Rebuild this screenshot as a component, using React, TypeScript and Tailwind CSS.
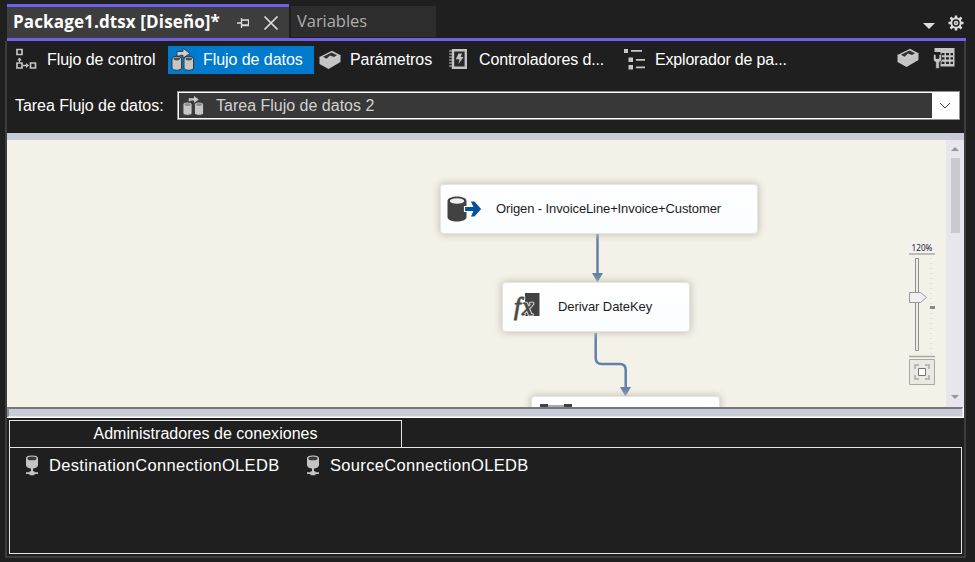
import type { ReactNode } from 'react';

function ControlFlowIcon() {
  return (
    <svg className="shrink-0" width="24" height="24" viewBox="0 0 24 24" fill="none" stroke="#c4c4c4" strokeWidth="1.700">
      <path d="M2 1.500h5v5H2zM2 15h5v5H2zM15.500 15h5v5h-5z" />
      <path d="M4.500 10v4M8 17.500h4" strokeWidth="1.300" />
      <path d="M2.200 12.500l2.300-3 2.300 3zM11 15l3 2.500-3 2.500z" fill="#c4c4c4" stroke="none" />
    </svg>
  );
}

function DataFlowIcon({ size = 24, compact = false }: { size?: number; compact?: boolean }) {
  return (
    <svg className="shrink-0" width={size} height={size} viewBox="0 0 24 24">
      <path d="M1 11c0-3.500 9.500-3.500 9.500 0v9c0 3-9.500 3-9.500 0zM13 11c0-3.500 9.500-3.500 9.500 0v9c0 3-9.500 3-9.500 0z" fill="#c6c6c6" stroke="#383838" strokeWidth="1" />
      <ellipse cx="5.800" cy="11" rx="3.300" ry="1.400" fill={compact ? '#8b8b8b' : '#505050'} />
      <ellipse cx="17.800" cy="11" rx="3.300" ry="1.400" fill={compact ? '#8b8b8b' : '#505050'} />
      {compact ? (
        <path d="M7 7.500V4.500h5.500V2l5 3.700-5 3.600V6.800H8.800v.7z" fill="#c8c8c8" />
      ) : (
        <path d="M6 8V3.500h6V.3l7 5.200-7 4.500V7.300H9V8z" fill="#cecece" stroke="#383838" strokeWidth=".9" />
      )}
    </svg>
  );
}

function ParametersIcon() {
  return (
    <svg className="shrink-0" width="22" height="20" viewBox="0 0 22 20">
      <path d="M.5 7L13 .8l8.500 4.400v6.800L9.500 19 .5 14z" fill="#c4c4c4" />
      <path d="M4 6.800L12.500 2.600 18 5.200l-3 1.700-4-1.500-3.500 3.400z" fill="#303030" />
      <path d="M.5 7l9 4 12-5.800" fill="none" stroke="#d2d2d2" strokeWidth=".7" />
    </svg>
  );
}

function EventHandlersIcon() {
  return (
    <svg className="shrink-0" width="20" height="21" viewBox="0 0 20 21">
      <path d="M5 1.200h12.800v17.600H5z" fill="#292929" stroke="#c4c4c4" strokeWidth="2.400" />
      <path d="M1 2h5M1 5h5M1 8h5M1 11h5M1 14h5M1 17h5" stroke="#c4c4c4" strokeWidth="1.200" />
      <path d="M10.500 4.500h3.500l-1.300 3.500h2.800l-5 7 1-4.800H7.800z" fill="#c4c4c4" />
    </svg>
  );
}

function ExplorerIcon() {
  return (
    <svg className="shrink-0" width="24" height="24" viewBox="0 0 24 24" fill="#c8c8c8">
      <path d="M1 1h4v4H1zM5.500 9.500H10V14H5.500zM5.500 17H10v4.500H5.500zM8 2h11v1.700H8zM13 11h9v1.700h-9zM13 18.500h9v1.700h-9z" />
    </svg>
  );
}

function GridToolIcon() {
  return (
    <svg className="shrink-0" width="22" height="22" viewBox="0 0 22 22">
      <path d="M1.500 1h20v18.500h-14V5h-6z" fill="#c6c6c6" />
      <path d="M8.500 6h3v2.200h-3zM13 6h3v2.200h-3zM17.500 6h2.500v2.200h-2.500zM8.500 10.300h3v2.200h-3zM13 10.300h3v2.200h-3zM17.500 10.300h2.500v2.200h-2.500zM8.500 14.700h3v2.200h-3zM13 14.700h3v2.200h-3zM17.500 14.700h2.500v2.200h-2.500z" fill="#252525" />
      <path d="M.5 7.500v6l2.300 1.800V21.500h3.400v-6.200l2.300-1.800v-6H6v4H3v-4z" fill="#c6c6c6" stroke="#252525" strokeWidth=".7" />
    </svg>
  );
}

function ConnectionIcon() {
  return (
    <svg className="shrink-0" width="14" height="21" viewBox="0 0 14 21" fill="#c4c4c4">
      <path d="M1 3c0-3.300 12-3.300 12 0v7c0 2.500-3 3.300-5 3.500v2.700h1.500v1H13v1.700H9.500v1.300h-5v-1.300H1v-1.700h3.500v-1H6v-2.700c-2-.2-5-1-5-3.500z" />
      <ellipse cx="7" cy="3.400" rx="4.600" ry="1.900" fill="#393939" />
    </svg>
  );
}

function TaskNode({ className, children }: { className: string; children?: ReactNode }) {
  return (
    <div className={`absolute flex items-center rounded-[4px] border border-[#e6e4df] bg-linear-to-b from-white to-[#fafcff] text-[13px] tracking-[-0.110px] text-[#1c1c1c] shadow-[0_0_7px_1px_#c6c2b4] ${className}`}>
      {children}
    </div>
  );
}

function Tab({ className, icon, children, active = false }: { className: string; icon: ReactNode; children: ReactNode; active?: boolean }) {
  return (
    <div className={`flex h-7 shrink-0 items-center whitespace-nowrap ${className} ${active ? 'bg-[#007acc]' : ''}`}>
      {icon}
      {children}
    </div>
  );
}

function Canvas() {
  return (
    <main className="relative flex h-[267px] shrink-0 justify-end overflow-hidden bg-[#f4f1e9]">
      <svg className="absolute left-0 top-0" width="939" height="267" fill="none" stroke="#6280a8" strokeWidth="2.500">
        <path d="M590.500 94v42M588.700 193v25q0 6 6 6h18q6 0 6 6v20" />
        <path d="M585 133h11l-5.500 9.500zM613 247h11l-5.500 9.500z" fill="#6280a8" stroke="none" />
      </svg>
      <TaskNode className="left-[433px] top-[44px] h-[50px] w-[318px]">
        <svg className="ml-[6px] shrink-0" width="36" height="28" viewBox="0 0 36 28">
          <path d="M.5 6c0-6 19-6 19 0v16c0 6-19 6-19 0z" fill="#424242" />
          <ellipse cx="10" cy="6" rx="7.200" ry="2.800" fill="#efefef" />
          <path d="M17.500 11.500h8L23 6h5l7 8-7 8h-5l2.500-5.500h-8z" fill="#00539c" stroke="white" strokeWidth="1.200" />
        </svg>
        <span className="ml-[13px] whitespace-nowrap">Origen - InvoiceLine+Invoice+Customer</span>
      </TaskNode>
      <TaskNode className="left-[495px] top-[142px] h-[50px] w-[188px]">
        <svg className="ml-[6px] shrink-0" width="32" height="34" viewBox="0 0 32 34">
          <path d="M16 3h14.500v23H16z" fill="#424242" />
          <g fontFamily="Liberation Serif, serif" fontSize="25" fontStyle="italic" strokeLinejoin="round">
            <g fill="#f4f4f4" stroke="#f4f4f4" strokeWidth="2.500">
              <text x="5" y="25">f</text>
              <text x="13" y="25">x</text>
            </g>
            <g fill="#484848" stroke="#484848" strokeWidth=".8">
              <text x="5" y="25">f</text>
              <text x="13" y="25">x</text>
            </g>
          </g>
        </svg>
        <span className="ml-[17px] tracking-[-0.080px]">Derivar DateKey</span>
      </TaskNode>
      <TaskNode className="left-[524px] top-[256px] h-[50px] w-[189px]">
        <svg className="absolute left-[8px] top-[7px]" width="32" height="20"><path d="M0 0h8v12H0zM24 0h8v12h-8z" fill="#424242" /><path d="M8 2h16" stroke="#aaa" strokeWidth="2" /></svg>
      </TaskNode>
      <div className="absolute left-[902px] top-[102px] flex w-[26px] flex-col">
        <span className="h-[11px] bg-[#f1f1f3] text-center font-['Noto_Sans',sans-serif] text-[8.200px] leading-[11px] text-[#222]">120%</span>
        <svg width="26" height="106">
          <path d="M0 1h26M0 103.500h26" stroke="#aaa9a3" strokeWidth="1.700" />
          <path d="M6.500 5.500h3v92h-3z" fill="#eee" stroke="#8d8d8a" />
          <path d="M22 5v96" stroke="#e5e2da" strokeWidth="3" strokeDasharray="1 4" />
          <path d="M.5 39.500h11l6 5-6 5H.5z" fill="#f0f0f0" stroke="#999" />
          <path d="M21 53h5v3h-5z" fill="#888" />
        </svg>
        <svg width="26" height="26" fill="none">
          <path d="M.5.5h25v25H.5z" fill="#eae8e1" stroke="#aaa8a2" />
          <path d="M6 10V6h4M16 6h4v4M20 16v4h-4M10 20H6v-4" stroke="#aaa" strokeWidth="1.500" />
          <path d="M9.500 9.500h7v7h-7z" fill="white" stroke="#737373" />
        </svg>
      </div>
      <aside className="flex w-[18px] flex-col items-center bg-[#e7e6ec]">
        <svg width="18" height="18"><path d="M5 11h8L9 7z" fill="#96969a" /></svg>
        <div className="h-[75px] w-[9px] bg-[#c9c9cf]" />
        <svg className="mt-auto" width="18" height="18"><path d="M5 6h8L9 10z" fill="#96969a" /></svg>
      </aside>
    </main>
  );
}

export default function App() {
  return (
    <div className="flex h-[562px] w-[975px] flex-col overflow-hidden bg-[#1f1f1f] pl-[5px] pr-[9px] pt-1 font-['Liberation_Sans',Arial,sans-serif] text-[16px] text-white">
      <header className="ml-0.5 flex h-[37px] shrink-0 border-b-3 border-[#7160e8]">
        <div className="flex w-[282px] items-center border-t-3 border-[#7160e8] bg-[#3d3d3d] pl-[6px] font-['Open_Sans',sans-serif] font-bold text-white">
          <span className="w-[224px] whitespace-nowrap pb-px text-[17px] tracking-[0.130px]">Package1.dtsx [Diseño]*</span>
          <svg className="shrink-0" width="12" height="12" viewBox="0 0 12 12" fill="none" stroke="#ddd" strokeWidth="1.300"><path d="M0 6h4M4.500 1v10M4.500 3h7v5h-7M5 8.500h7" /></svg>
          <svg className="ml-[14px] shrink-0" width="16" height="16" viewBox="0 0 16 16" stroke="#ddd" strokeWidth="1.700"><path d="M1.500 1.500l13 13M14.500 1.500l-13 13" /></svg>
        </div>
        <div className="ml-0.5 mt-0.5 h-[31px] w-[145px] bg-[#2d2d2d] pl-[6px] font-['Open_Sans',sans-serif] text-[16.500px] leading-[30px] tracking-[-0.050px] text-[#adadad]">Variables</div>
        <div className="ml-auto flex items-center pr-0.5">
          <svg className="mt-[11px]" width="12" height="7"><path d="M0 0h12L6 6z" fill="#ddd" /></svg>
          <svg className="ml-[13px] mt-[3px]" width="16" height="16" viewBox="0 0 16 16" fill="none" stroke="#ddd">
            <circle cx="8" cy="8" r="4.700" strokeWidth="2" /><circle cx="8" cy="8" r="1.500" strokeWidth="1.500" />
            <path d="M8 .5v3M8 12.500v3M.5 8h3M12.500 8h3M2.500 2.500l2 2M11.500 11.500l2 2M2.500 13.500l2-2M11.500 4.500l2-2" strokeWidth="2.500" />
          </svg>
        </div>
      </header>
      <div className="flex h-[517px] flex-col border-x-2 border-b-2 border-[#3d3d3d]">
        <nav className="flex h-[37px] shrink-0 items-center">
          <Tab className="ml-2 w-[153px] gap-2 tracking-[-0.060px]" icon={<ControlFlowIcon />}>Flujo de control</Tab>
          <Tab className="w-[146px] gap-[8px] pl-[3px] tracking-[-0.060px]" icon={<DataFlowIcon />} active>Flujo de datos</Tab>
          <Tab className="ml-[5px] w-[129px] gap-[9px] tracking-[-0.060px]" icon={<ParametersIcon />}>Parámetros</Tab>
          <Tab className="w-[175px] gap-[11px] tracking-[-0.110px]" icon={<EventHandlersIcon />}>Controladores d...</Tab>
          <Tab className="w-[166px] gap-[8px] tracking-[-0.180px]" icon={<ExplorerIcon />}>Explorador de pa...</Tab>
          <div className="mb-[3px] ml-auto flex items-center gap-[14px] pr-[9px]"><ParametersIcon /><GridToolIcon /></div>
        </nav>
        <div className="flex h-[55px] shrink-0 items-start pl-2 pt-[13px]">
          <span className="w-[162px] whitespace-nowrap leading-[30px] tracking-[-0.040px]">Tarea Flujo de datos:</span>
          <div className="h-[29px] w-[783px] border border-[#929292]">
            <div className="flex h-full items-center border border-white bg-[#383838] pl-[3px] text-[#d2d2d2]">
              <DataFlowIcon size={23} compact />
              <span className="ml-[11px]">Tarea Flujo de datos 2</span>
              <div className="ml-auto flex h-full w-[26px] items-center justify-center bg-white">
                <svg width="12" height="8" fill="none" stroke="#444"><path d="M1 1l5 5 5-5" /></svg>
              </div>
            </div>
          </div>
        </div>
        <div className="h-[7px] shrink-0 bg-[#c8ccd9]" />
        <Canvas />
        <div className="h-[11px] shrink-0 border-b border-r border-white bg-white">
          <div className="h-[10px] border-b border-l-2 border-r border-t-2 border-b-[#e5e5e8] border-l-[#8b8b90] border-r-[#e5e5e8] border-t-[#77777a] bg-[#c8ccd9]" />
        </div>
        <section className="mx-0.5 mb-0.5 mt-[2px] flex min-h-0 grow flex-col">
          <div className="flex h-[27px] w-[393px] shrink-0 items-center justify-center border border-b-0 border-[#e5e5e5] tracking-[0.030px]">Administradores de conexiones</div>
          <div className="flex grow border border-[#e5e5e5] pl-[15px] pt-[5px] text-[16.500px] tracking-[0.330px]">
            <div className="flex h-6 w-[281px] items-center gap-[10px]"><ConnectionIcon />DestinationConnectionOLEDB</div>
            <div className="flex h-6 items-center gap-[10px]"><ConnectionIcon />SourceConnectionOLEDB</div>
          </div>
        </section>
      </div>
    </div>
  );
}
